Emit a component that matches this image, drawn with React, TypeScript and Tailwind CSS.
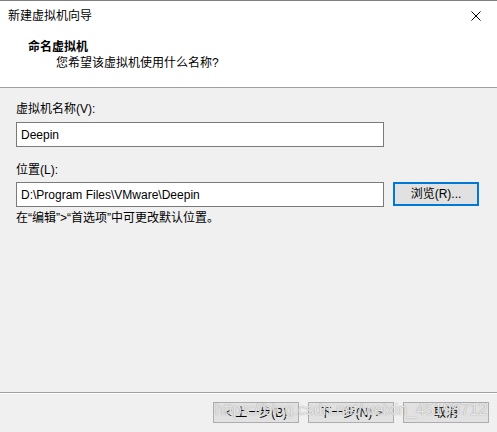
import React from 'react';

const uiFont = "font-['Liberation_Sans','Noto_Sans_CJK_SC',sans-serif]";

const WizardButton = ({ label }: { label: string }) => (
  <button className="w-[86px] h-[21px] bg-[#e1e1e1] border border-[#adadad] text-[12px] leading-[16px] text-black">
    {label}
  </button>
);

export default function App() {
  return (
    <div className={`relative w-[497px] h-[432px] flex flex-col bg-[#f0f0f0] border-t border-[#808080] text-[12px] leading-[16px] text-black ${uiFont}`}>
      {/* Header */}
      <div className="h-[87px] bg-white border-b border-[#a0a0a0] shrink-0">
        <div className="h-[30px] flex items-center justify-between pl-[8px] pr-[16px]">
          <span>新建虚拟机向导</span>
          <svg width="10" height="10" viewBox="0 0 10 10" className="text-black">
            <path d="M0.5 0.5 L9.5 9.5 M9.5 0.5 L0.5 9.5" stroke="currentColor" strokeWidth="1" fill="none" />
          </svg>
        </div>
        <div className="mt-[8px] pl-[28px] font-bold">命名虚拟机</div>
        <div className="pl-[56px]">您希望该虚拟机使用什么名称?</div>
      </div>

      {/* Body */}
      <div className="px-4 pt-[13px] flex flex-col">
        <label>虚拟机名称(V):</label>
        <div className="mt-[5px] w-[368px] h-[25px] bg-white border border-[#7a7a7a] flex items-center pl-[4px]">
          Deepin
        </div>
        <label className="mt-[15px]">位置(L):</label>
        <div className="mt-[4px] flex items-start gap-[9px]">
          <div className="w-[368px] h-[25px] bg-white border border-[#7a7a7a] flex items-center pl-[4px]">
            D:\Program Files\VMware\Deepin
          </div>
          <button className="w-[86px] h-[24px] bg-[#e1e1e1] border-2 border-[#0078d7] text-[12px] leading-[16px]">
            浏览(R)...
          </button>
        </div>
        <p className="mt-[3px]">在“编辑”&gt;“首选项”中可更改默认位置。</p>
      </div>

      {/* Footer */}
      <div className="mt-auto border-t border-[#a0a0a0]">
        <div className="border-t border-white pt-[8px] pb-[9px] pr-[8px] flex justify-end gap-[9px]">
          <WizardButton label="< 上一步(B)" />
          <WizardButton label="下一步(N) >" />
          <WizardButton label="取消" />
        </div>
      </div>

      {/* CSDN watermark */}
      <div className="absolute left-[215px] top-[399px] font-['Liberation_Sans',sans-serif] text-[16px] leading-[20px] text-white/80 [text-shadow:0_0_1px_#777] pointer-events-none whitespace-nowrap">
        https://blog.csdn.net/weixin_45198712
      </div>
    </div>
  );
}
